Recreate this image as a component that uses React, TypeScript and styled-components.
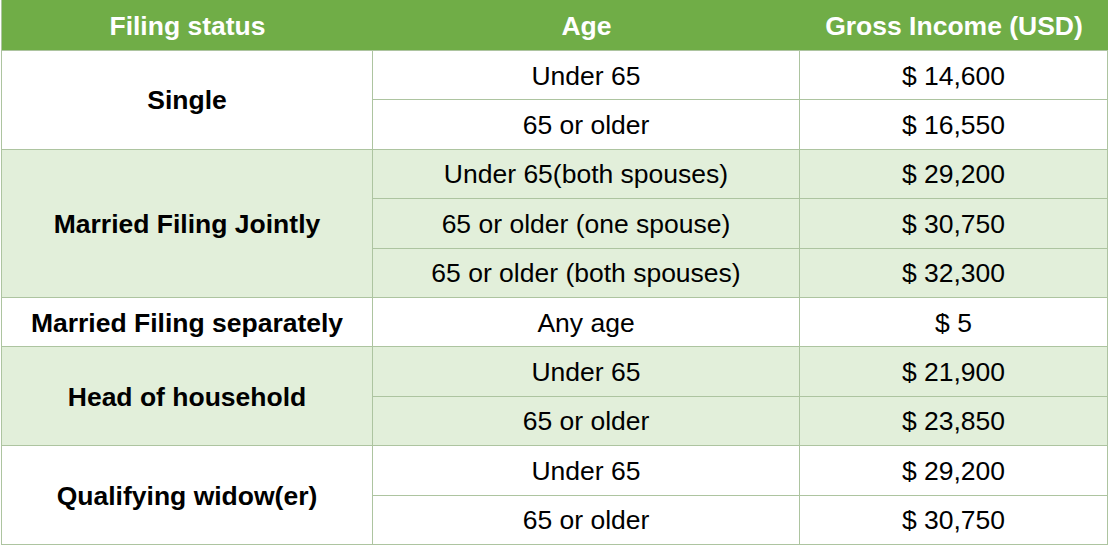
import React from "react";
import styled, { createGlobalStyle } from "styled-components";

const Global = createGlobalStyle`
  html, body { margin: 0; padding: 0; background: #ffffff; }
  body { font-family: "Liberation Sans", Arial, sans-serif; }
`;

const LINE = "#adc4a0";

const Table = styled.div`
  box-sizing: border-box;
  margin-left: 1px;
  width: 1107px;
  display: grid;
  grid-template-columns: 371px 427px 1fr;
  grid-template-rows: 50px repeat(10, 49.4px);
  border-left: 1px solid ${LINE};
  border-bottom: 1px solid ${LINE};
  font-size: 26.5px;
  color: #000;
`;

const Head = styled.div`
  background: #70ad47;
  color: #ffffff;
  font-weight: bold;
  display: flex;
  align-items: center;
  justify-content: center;
  padding-top: 2px;
  box-sizing: border-box;
`;

const Cell = styled.div<{ $shade: boolean; $span?: number; $bold?: boolean }>`
  box-sizing: border-box;
  background: ${(p) => (p.$shade ? "#e2efda" : "#ffffff")};
  border-right: 1px solid ${LINE};
  border-top: 1px solid ${LINE};
  display: flex;
  align-items: center;
  justify-content: center;
  font-weight: ${(p) => (p.$bold ? "bold" : "normal")};
  ${(p) => (p.$span ? `grid-row: span ${p.$span};` : "")}
  padding-top: 2px;
`;

const groups = [
  { status: "Single", rows: [["Under 65", "$ 14,600"], ["65 or older", "$ 16,550"]] },
  {
    status: "Married Filing Jointly",
    rows: [
      ["Under 65(both spouses)", "$ 29,200"],
      ["65 or older (one spouse)", "$ 30,750"],
      ["65 or older (both spouses)", "$ 32,300"],
    ],
  },
  { status: "Married Filing separately", rows: [["Any age", "$ 5"]] },
  { status: "Head of household", rows: [["Under 65", "$ 21,900"], ["65 or older", "$ 23,850"]] },
  { status: "Qualifying widow(er)", rows: [["Under 65", "$ 29,200"], ["65 or older", "$ 30,750"]] },
];

export default function App() {
  return (
    <>
      <Global />
      <Table>
        <Head>Filing status</Head>
        <Head>Age</Head>
        <Head>Gross Income (USD)</Head>
        {groups.map((g, gi) => {
          const shade = gi % 2 === 1;
          return (
            <React.Fragment key={g.status}>
              {g.rows.map((r, ri) => (
                <React.Fragment key={ri}>
                  {ri === 0 && (
                    <Cell $shade={shade} $bold $span={g.rows.length}>
                      {g.status}
                    </Cell>
                  )}
                  <Cell $shade={shade}>{r[0]}</Cell>
                  <Cell $shade={shade}>{r[1]}</Cell>
                </React.Fragment>
              ))}
            </React.Fragment>
          );
        })}
      </Table>
    </>
  );
}
